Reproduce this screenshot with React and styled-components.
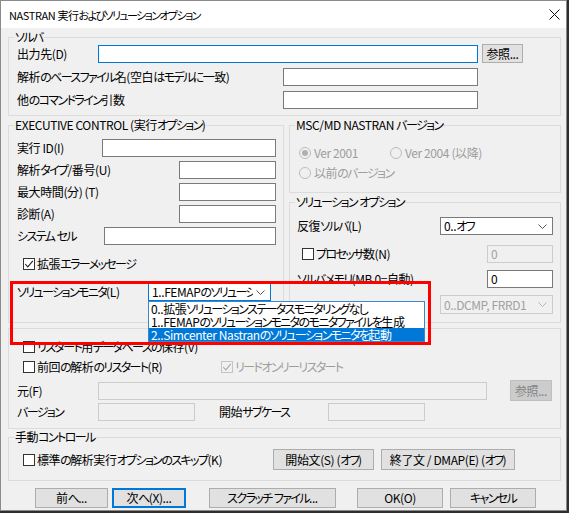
import React from "react";
import styled, { createGlobalStyle } from "styled-components";

const GlobalStyle = createGlobalStyle`
  * {
    box-sizing: border-box;
  }
  body {
    margin: 0;
    background: #2e2e2e;
  }
`;

// kana runs are set tighter, closer to the narrow kana of the Windows UI font
const KANA = /([\u3040-\u30ff]+)/;
const jp = (text) =>
  text.split(KANA).map((part, i) => (i % 2 ? <Kana key={i}>{part}</Kana> : part));

const Chevron = ({ color = "#444" }) => (
  <svg width="9" height="5" viewBox="0 0 9 5">
    <path d="M0.5 0.5 L4.5 4.5 L8.5 0.5" fill="none" stroke={color} strokeWidth="1" />
  </svg>
);

const Checkbox = ({ checked, disabled, ml }) => (
  <CheckBox $disabled={disabled} $ml={ml}>
    {checked && (
      <svg width="10" height="10" viewBox="0 0 10 10">
        <path
          d="M1.2 5 L3.8 7.8 L8.8 1.8"
          fill="none"
          stroke={disabled ? "#a8a8a8" : "#222"}
          strokeWidth="1.1"
        />
      </svg>
    )}
  </CheckBox>
);

const Select = ({ w, h = 18, text, disabled, focus, children }) => (
  <SelectBox $w={w} $h={h} $disabled={disabled} $focus={focus}>
    <SelectText $disabled={disabled}>{jp(text)}</SelectText>
    <Chevron color={disabled ? "#b5b5b5" : "#555"} />
    {children}
  </SelectBox>
);

const monitorItems = [
  "0..拡張ソリューションステータスモニタリングなし",
  "1..FEMAPのソリューションモニタのモニタファイルを生成",
  "2..Simcenter Nastranのソリューションモニタを起動",
];

const App = () => {
  return (
    <>
      <GlobalStyle />
      <Window>
        <TitleBar>
          <span>{jp("NASTRAN 実行およびソリューションオプション")}</span>
          <svg width="11" height="11" viewBox="0 0 11 11">
            <path d="M0.5 0.5 L10.5 10.5 M10.5 0.5 L0.5 10.5" stroke="#111" strokeWidth="1" />
          </svg>
        </TitleBar>

        <Body>
          <Group $mt={9} $h={79} $pad="6px 0 0 8px">
            <Legend>{jp("ソルバ")}</Legend>
            <Row $h={19}>
              <Label $w={81}>出力先(D)</Label>
              <Input $w={380} $focus />
              <Button $w={41} $h={19} $ml={4}>参照...</Button>
            </Row>
            <Row $h={19} $mt={4}>
              <Label $w={266}>{jp("解析のベースファイル名(空白はモデルに一致)")}</Label>
              <Input $w={195} />
            </Row>
            <Row $h={19} $mt={4}>
              <Label $w={266}>{jp("他のコマンドライン引数")}</Label>
              <Input $w={195} />
            </Row>
          </Group>

          <Columns>
            <Group $w={276} $h={198} $pad="13px 7px 0 8px">
              <Legend>{jp("EXECUTIVE CONTROL (実行オプション)")}</Legend>
              <SpreadRow>
                <span>実行 ID(I)</span>
                <Input $w={174} />
              </SpreadRow>
              <SpreadRow $mt={4}>
                <span>{jp("解析タイプ/番号(U)")}</span>
                <Input $w={97} />
              </SpreadRow>
              <SpreadRow $mt={4}>
                <span>最大時間(分) (T)</span>
                <Input $w={97} />
              </SpreadRow>
              <SpreadRow $mt={4}>
                <span>診断(A)</span>
                <Input $w={97} />
              </SpreadRow>
              <SpreadRow $mt={4}>
                <span>{jp("システム セル")}</span>
                <Input $w={172} />
              </SpreadRow>
              <Row $h={14} $mt={12}>
                <Checkbox checked ml={6} />
                <span>{jp("拡張エラーメッセージ")}</span>
              </Row>
              <Row $h={18} $mt={12}>
                <Label $w={131}>{jp("ソリューションモニタ(L)")}</Label>
                <Select w={123} focus text="1..FEMAPのソリューションモニタのモニタファイルを生成">
                  <DropList>
                    {monitorItems.map((item, i) => (
                      <DropItem key={item} $active={i === 2}>
                        {jp(item)}
                      </DropItem>
                    ))}
                  </DropList>
                </Select>
              </Row>
            </Group>

            <RightColumn>
              <Group $h={68} $pad="20px 0 0 9px">
                <Legend>{jp("MSC/MD NASTRAN バージョン")}</Legend>
                <Row $h={14}>
                  <RadioItem $w={91}>
                    <Radio $checked />
                    <Label $disabled>Ver 2001</Label>
                  </RadioItem>
                  <RadioItem>
                    <Radio />
                    <Label $disabled>Ver 2004 (以降)</Label>
                  </RadioItem>
                </Row>
                <Row $h={14} $mt={6}>
                  <RadioItem>
                    <Radio />
                    <Label $disabled>{jp("以前のバージョン")}</Label>
                  </RadioItem>
                </Row>
              </Group>

              <Group $mt={9} $h={121} $pad="14px 7px 0 7px">
                <Legend>{jp("ソリューション オプション")}</Legend>
                <SpreadRow>
                  <span>{jp("反復ソルバ(L)")}</span>
                  <Select w={113} text="0..オフ" />
                </SpreadRow>
                <SpreadRow $mt={10}>
                  <Row $h={14}>
                    <Checkbox ml={5} />
                    <span>{jp("プロセッサ数(N)")}</span>
                  </Row>
                  <Input $w={66} $disabled>0</Input>
                </SpreadRow>
                <SpreadRow $mt={7}>
                  <span>{jp("ソルバメモリ(MB 0=自動)")}</span>
                  <Input $w={66}>0</Input>
                </SpreadRow>
                <EndRow $mt={7} $h={19}>
                  <Select w={113} h={19} disabled text="0..DCMP, FRRD1" />
                </EndRow>
              </Group>
            </RightColumn>
          </Columns>

          <Group $mt={5} $h={101} $pad="11px 0 0 8px">
            <Row $h={14}>
              <Checkbox ml={6} />
              <span>{jp("リスタート用データベースの保存(V)")}</span>
            </Row>
            <Row $h={14} $mt={6}>
              <Item $w={204}>
                <Checkbox ml={6} />
                <span>{jp("前回の解析のリスタート(R)")}</span>
              </Item>
              <Item>
                <Checkbox checked disabled />
                <Label $disabled>{jp("リードオンリーリスタート")}</Label>
              </Item>
            </Row>
            <Row $h={21} $mt={6}>
              <Label $w={81}>元(F)</Label>
              <Input $w={389} $disabled />
              <Button $w={42} $h={21} $ml={23} $disabled>参照...</Button>
            </Row>
            <Row $h={18} $mt={2}>
              <Label $w={81}>{jp("バージョン")}</Label>
              <Input $w={97} $disabled />
              <Label $w={109} $ml={24}>{jp("開始サブケース")}</Label>
              <Input $w={97} $disabled />
            </Row>
          </Group>

          <Group $mt={8} $h={44} $pad="11px 0 0 8px">
            <Legend>{jp("手動コントロール")}</Legend>
            <Row $h={21}>
              <Item $w={256}>
                <Checkbox ml={6} />
                <span>{jp("標準の解析実行オプションのスキップ(K)")}</span>
              </Item>
              <Button $w={101} $h={21}>{jp("開始文(S) (オフ)")}</Button>
              <Button $w={134} $h={21} $ml={7}>{jp("終了文 / DMAP(E) (オフ)")}</Button>
            </Row>
          </Group>

          <ButtonRow>
            <Button $w={73} $h={20}>{jp("前へ...")}</Button>
            <Button $w={74} $h={20} $ml={4} $default>{jp("次へ(X)...")}</Button>
            <Button $w={127} $h={20} $ml={23}>{jp("スクラッチ ファイル...")}</Button>
            <Button $w={86} $h={20} $ml={21}>OK(O)</Button>
            <Button $w={86} $h={20} $ml={7}>{jp("キャンセル")}</Button>
          </ButtonRow>
        </Body>

        <Highlight />
      </Window>
    </>
  );
};

export default App;

const Window = styled.div`
  position: relative;
  width: 567px;
  height: 511px;
  display: flex;
  flex-direction: column;
  background: #f0f0f0;
  border: 1px solid #8a8a8a;
  color: #000;
  font-family: "Noto Sans CJK JP", "Noto Sans", sans-serif;
  font-size: 12px;
  line-height: 14px;
  font-feature-settings: "palt" 1;
  letter-spacing: -0.4px;
`;

const Kana = styled.span`
  letter-spacing: -1.6px;
`;

const TitleBar = styled.div`
  height: 27px;
  flex: none;
  display: flex;
  align-items: center;
  justify-content: space-between;
  padding: 0 6px 0 8px;
  background: #fff;
  font-size: 11px;
`;

const Body = styled.div`
  display: flex;
  flex-direction: column;
  padding: 0 5px 0 7px;
`;

const Group = styled.div`
  position: relative;
  flex: none;
  width: ${(p) => (p.$w ? `${p.$w}px` : "auto")};
  height: ${(p) => p.$h}px;
  margin-top: ${(p) => p.$mt || 0}px;
  padding: ${(p) => p.$pad};
  border: 1px solid #dcdcdc;
`;

const Legend = styled.span`
  position: absolute;
  left: 5px;
  top: -8px;
  padding: 0 1px;
  background: #f0f0f0;
  white-space: nowrap;
`;

const Columns = styled.div`
  display: flex;
  gap: 5px;
  margin-top: 9px;
`;

const RightColumn = styled.div`
  flex: 1;
  display: flex;
  flex-direction: column;
`;

const Row = styled.div`
  display: flex;
  align-items: center;
  height: ${(p) => p.$h || 18}px;
  margin-top: ${(p) => p.$mt || 0}px;
  white-space: nowrap;
`;

const SpreadRow = styled(Row)`
  justify-content: space-between;
`;

const EndRow = styled(Row)`
  justify-content: flex-end;
`;

const Item = styled.div`
  display: flex;
  align-items: center;
  width: ${(p) => (p.$w ? `${p.$w}px` : "auto")};
  flex: none;
`;

const RadioItem = styled(Item)`
  gap: 3px;
`;

const Label = styled.span`
  flex: none;
  width: ${(p) => (p.$w ? `${p.$w}px` : "auto")};
  margin-left: ${(p) => p.$ml || 0}px;
  white-space: nowrap;
  color: ${(p) => (p.$disabled ? "#9d9d9d" : "#000")};
`;

const Input = styled.div`
  flex: none;
  width: ${(p) => p.$w}px;
  height: ${(p) => p.$h || 18}px;
  display: flex;
  align-items: center;
  padding-left: 3px;
  background: ${(p) => (p.$disabled ? "#f0f0f0" : "#fff")};
  border: 1px solid
    ${(p) => (p.$focus ? "#0078d7" : p.$disabled ? "#cccccc" : "#7a7a7a")};
  color: ${(p) => (p.$disabled ? "#a0a0a0" : "#000")};
`;

const SelectBox = styled.div`
  position: relative;
  flex: none;
  width: ${(p) => p.$w}px;
  height: ${(p) => p.$h}px;
  display: flex;
  align-items: center;
  gap: 3px;
  padding: 0 5px 0 3px;
  background: ${(p) => (p.$disabled ? "#f0f0f0" : "#fff")};
  border: 1px solid
    ${(p) => (p.$focus ? "#0078d7" : p.$disabled ? "#cccccc" : "#7a7a7a")};
`;

const SelectText = styled.span`
  flex: 1;
  overflow: hidden;
  white-space: nowrap;
  color: ${(p) => (p.$disabled ? "#a0a0a0" : "#000")};
`;

const DropList = styled.div`
  position: absolute;
  left: -1px;
  top: calc(100% + 1px);
  width: 277px;
  display: flex;
  flex-direction: column;
  background: #fff;
  border: 1px solid #3c86cf;
  z-index: 2;
`;

const DropItem = styled.div`
  height: 13px;
  line-height: 13px;
  padding-left: 2px;
  white-space: nowrap;
  overflow: hidden;
  background: ${(p) => (p.$active ? "#0078d7" : "#fff")};
  color: ${(p) => (p.$active ? "#fff" : "#000")};
`;

const CheckBox = styled.span`
  flex: none;
  width: 12px;
  height: 12px;
  display: inline-flex;
  align-items: center;
  justify-content: center;
  margin-left: ${(p) => p.$ml || 0}px;
  margin-right: 2px;
  background: ${(p) => (p.$disabled ? "#f0f0f0" : "#fff")};
  border: 1px solid ${(p) => (p.$disabled ? "#c4c4c4" : "#333")};
`;

const Radio = styled.span`
  flex: none;
  width: 12px;
  height: 12px;
  display: inline-flex;
  align-items: center;
  justify-content: center;
  border-radius: 50%;
  background: #f0f0f0;
  border: 1px solid #bcbcbc;

  &::after {
    content: "";
    display: ${(p) => (p.$checked ? "block" : "none")};
    width: 6px;
    height: 6px;
    border-radius: 50%;
    background: #b0b0b0;
  }
`;

const Button = styled.button`
  flex: none;
  width: ${(p) => p.$w}px;
  height: ${(p) => p.$h}px;
  margin-left: ${(p) => p.$ml || 0}px;
  padding: 0;
  font: inherit;
  letter-spacing: inherit;
  font-feature-settings: inherit;
  white-space: nowrap;
  color: ${(p) => (p.$disabled ? "#838383" : "#000")};
  background: ${(p) => (p.$disabled ? "#cccccc" : "#e1e1e1")};
  border: ${(p) =>
    p.$default
      ? "2px solid #0078d7"
      : `1px solid ${p.$disabled ? "#bfbfbf" : "#adadad"}`};
`;

const ButtonRow = styled.div`
  display: flex;
  align-items: center;
  height: 20px;
  margin-top: 7px;
  padding-left: 27px;
`;

const Highlight = styled.div`
  position: absolute;
  left: 9px;
  top: 280px;
  width: 421px;
  height: 64px;
  border: 3px solid #ff0000;
  pointer-events: none;
  z-index: 3;
`;
